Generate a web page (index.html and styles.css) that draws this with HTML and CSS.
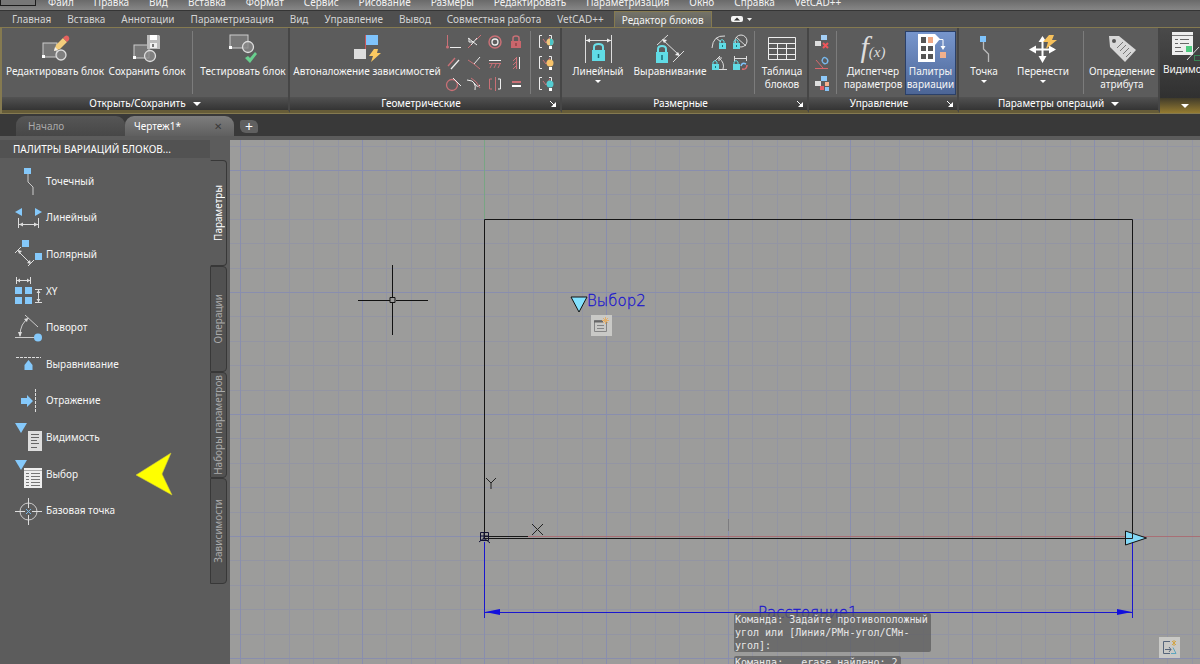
FILE: index.html
```
<!DOCTYPE html>
<html lang="ru">
<head>
<meta charset="utf-8">
<title>Редактор блоков</title>
<link rel="stylesheet" href="styles.css">
</head>
<body>
<nav class="menubar" aria-label="Меню">
  <span class="app-corner"></span>
  <a href="#">Файл</a><a href="#">Правка</a><a href="#">Вид</a><a href="#">Вставка</a><a href="#">Формат</a><a href="#">Сервис</a><a href="#">Рисование</a><a href="#">Размеры</a><a href="#">Редактировать</a><a href="#">Параметризация</a><a href="#">Окно</a><a href="#">Справка</a><a href="#">VetCAD++</a>
</nav>
<nav class="ribbon-tabs" aria-label="Вкладки ленты">
  <button>Главная</button><button>Вставка</button><button>Аннотации</button><button>Параметризация</button><button>Вид</button><button>Управление</button><button>Вывод</button><button>Совместная работа</button><button>VetCAD++</button><button class="active">Редактор блоков</button>
  <button class="collapse" aria-label="Свернуть ленту"><svg width="24" height="8"><rect x="0" y="1" width="12" height="6" rx="2" fill="#f4f4f4"/><path d="M3 5.500 6 2.500l3 3z" fill="#333"/><path d="M16 3h5l-2.500 3z" fill="#eee"/></svg></button>
</nav>

<header class="ribbon">
  <section class="panel p-open">
    <div class="panel-body">
      <button class="tool w102"><svg width="32" height="32" viewBox="0 0 32 32"><rect x="4" y="11" width="14" height="14" fill="#777" stroke="#ccc"/><circle cx="22" cy="23" r="5" fill="#888" fill-opacity=".8" stroke="#ddd" stroke-width="1.300"/><rect x="3" y="23" width="3" height="3" fill="#fff"/><path d="M15 19l2-6 7-7 4 4-7 7z" fill="#f3cd7c"/><path d="M24 6l2-2q2-1 3.500.5t.5 3.500l-2 2z" fill="#e5625e"/><path d="M15 19l1-4 3 3z" fill="#eee"/></svg><span>Редактировать блок</span></button>
      <button class="tool w82"><svg width="32" height="32" viewBox="0 0 32 32"><rect x="3" y="13" width="15" height="13" fill="#777" stroke="#ccc"/><circle cx="19" cy="24" r="5.500" fill="#888" fill-opacity=".8" stroke="#ddd" stroke-width="1.300"/><rect x="2" y="24" width="3" height="3" fill="#fff"/><path d="M16 3h12l1 1v13H16z" fill="#bbb"/><rect x="19" y="3" width="7" height="5" fill="#fff"/><rect x="19" y="11" width="7" height="5" fill="#eee"/><rect x="21" y="12" width="2" height="3" fill="#777"/></svg><span>Сохранить блок</span></button>
      <i class="sep"></i>
      <button class="tool w92"><svg width="32" height="32" viewBox="0 0 32 32"><rect x="3" y="3" width="18" height="13" fill="#777" stroke="#ccc"/><circle cx="21" cy="15" r="5.500" fill="#888" fill-opacity=".8" stroke="#ddd" stroke-width="1.300"/><rect x="2" y="14" width="3" height="3" fill="#fff"/><path d="M18 26l3-2 2 2 5-6 2 2-7 9z" fill="#69cf8e"/></svg><span>Тестировать блок</span></button>
    </div>
    <button class="panel-title">Открыть/Сохранить<b class="down"></b></button>
  </section>

  <section class="panel p-geom">
    <div class="panel-body">
      <button class="tool w150"><svg width="32" height="32" viewBox="0 0 32 32"><path d="M14.500 3v24" stroke="#c8555c"/><rect x="15" y="3" width="12" height="10" fill="#7fc3fb"/><rect x="3" y="17" width="12" height="10" fill="#ddd"/><path d="M23 17h4l-1 4h4L20 30l2-6h-4z" fill="#fbc961"/></svg><span>Автоналожение зависимостей</span></button>
      <div class="icon-grid four">
        <button aria-label="Совпадение"><svg width="16" height="16"><path d="M2.500 1v12" stroke="#c97076"/><circle cx="2.500" cy="13" r="1.500" fill="#c97076"/><path d="M5 13.500h11" stroke="#eee"/></svg></button>
        <button aria-label="Коллинеарность"><svg width="16" height="16"><path d="M2 14l5-5M10 6l5-5" stroke="#c97076"/><path d="M2 4l9 7M5 11l6-7M3 4v4h5" fill="none" stroke="#eee"/></svg></button>
        <button aria-label="Концентричность"><svg width="16" height="16" fill="none"><circle cx="8" cy="8" r="6" stroke="#c97076" stroke-width="1.500"/><circle cx="8" cy="8" r="3" stroke="#eee" stroke-width="1.300"/></svg></button>
        <button aria-label="Фиксация"><svg width="16" height="16"><path d="M5 7V4q0-2 3-2t3 2v3" fill="none" stroke="#c97076" stroke-width="1.500"/><rect x="3" y="7" width="10" height="7" fill="#c9666c"/><path d="M8 9v3" stroke="#733"/></svg></button>
        <button aria-label="Параллельность"><svg width="16" height="16"><path d="M3 11l7-8" stroke="#c97076" stroke-width="1.300"/><path d="M6 14l8-9" stroke="#eee" stroke-width="1.300"/></svg></button>
        <button aria-label="Перпендикулярность"><svg width="16" height="16"><path d="M8 9l6-7" stroke="#eee"/><path d="M2 5l6 4 6 5" fill="none" stroke="#c97076"/></svg></button>
        <button aria-label="Горизонтальность"><svg width="16" height="16"><path d="M2 5.500h12" stroke="#eee"/><path d="M2 8.500h12M5 9l-2 4M9 9l-2 4M13 9l-2 4" stroke="#c97076"/></svg></button>
        <button aria-label="Вертикальность"><svg width="16" height="16"><path d="M11.500 2v12" stroke="#eee"/><path d="M8.500 2v12M8 3L5 6M8 7l-3 3M8 11l-3 3" stroke="#c97076"/></svg></button>
        <button aria-label="Касательность"><svg width="16" height="16"><circle cx="7" cy="9" r="5.500" fill="none" stroke="#c97076" stroke-width="1.300"/><path d="M8 2l8 8" stroke="#eee"/></svg></button>
        <button aria-label="Сглаживание"><svg width="16" height="16" fill="none"><path d="M1 4q6 0 8 4t5 1" stroke="#eee"/><path d="M5 2q6 3 9 10" stroke="#c97076"/><path d="M8 7q2 3 1 7" stroke="#eee"/></svg></button>
        <button aria-label="Симметрия"><svg width="16" height="16" fill="none"><path d="M5 3H2.500v10H5M8.500 1v14" stroke="#c97076"/><path d="M11 3h2.500v10H11" stroke="#eee"/></svg></button>
        <button aria-label="Равенство"><svg width="16" height="16"><path d="M4 6h9" stroke="#c97076" stroke-width="2"/><path d="M4 10h9" stroke="#fff" stroke-width="2"/></svg></button>
      </div>
      <i class="sep"></i>
      <div class="icon-grid one">
        <button aria-label="Показать или скрыть"><svg width="16" height="16" fill="none"><path d="M4 1.500H1.500v12H4M11 1.500h2.500v4" stroke="#eee"/><path d="M5 5l3 4 4-6" stroke="#c97076"/><circle cx="12" cy="8" r="3.500" fill="#edc77d"/><path d="M12 4.500a3.500 3.500 0 0 1 0 7z" fill="#4bc5c8"/><rect x="11" y="12" width="3" height="3" fill="#fff"/></svg></button>
        <button aria-label="Показать все"><svg width="16" height="16" fill="none"><path d="M4 1.500H1.500v12H4M11 1.500h2.500v4" stroke="#eee"/><path d="M5 5l3 4 4-6" stroke="#c97076"/><circle cx="12" cy="8" r="3.500" fill="#f6c269"/><rect x="11" y="12" width="3" height="3" fill="#fff"/></svg></button>
        <button aria-label="Скрыть все"><svg width="16" height="16" fill="none"><path d="M4 1.500H1.500v12H4M11 1.500h2.500v4" stroke="#eee"/><path d="M5 5l3 4 4-6" stroke="#c97076"/><circle cx="12" cy="8" r="3.500" fill="#54cdd2"/><rect x="11" y="12" width="3" height="3" fill="#fff"/></svg></button>
      </div>
    </div>
    <button class="panel-title with-launch">Геометрические<svg class="launch" width="6" height="6"><path d="M0 0l4 4" stroke="#fff"/><path d="M6 1v5H1z" fill="#fff"/></svg></button>
  </section>

  <section class="panel p-dim">
    <div class="panel-body">
      <button class="tool w68"><svg width="32" height="32" viewBox="0 0 32 32"><path d="M3.500 3v28M29.500 3v28M4 8.500h25" stroke="#ddd"/><path d="M4 8.500l4-2v4zM29 8.500l-4-2v4z" fill="#eee"/><path d="M12 19v-4q0-3 4.500-3t4.500 3v4" fill="none" stroke="#6adfe8" stroke-width="2"/><rect x="10" y="18" width="13" height="11" fill="#60dce6"/><path d="M16.500 22v4" stroke="#176b74" stroke-width="1.500"/></svg><span>Линейный</span><b class="down small"></b></button>
      <button class="tool w76"><svg width="32" height="32" viewBox="0 0 32 32"><path d="M3 13L14 3M19 30L30 19M9 8l16 15" stroke="#ddd"/><path d="M8 7l5 1-3 3zM26 24l-5-1 3-3z" fill="#eee"/><path d="M4 21v-4q0-3 4-3t4 3v4" fill="none" stroke="#6adfe8" stroke-width="2"/><rect x="2" y="20" width="12" height="11" fill="#60dce6"/><path d="M8 23v5" stroke="#176b74" stroke-width="1.500"/></svg><span>Выравнивание</span></button>
      <div class="icon-grid two">
        <button aria-label="Радиус"><svg width="16" height="16" fill="none"><path d="M1 14Q2 1 14 2M5 4l5 4" stroke="#ddd"/><path d="M9 9V7q2-3 4 0v2" stroke="#60dce6"/><rect x="8" y="9" width="7" height="6" fill="#60dce6"/><path d="M11.500 11v2" stroke="#177"/></svg></button>
        <button aria-label="Диаметр"><svg width="16" height="16" fill="none"><circle cx="9" cy="7" r="6" stroke="#ddd"/><path d="M4 3l10 9" stroke="#ddd"/><path d="M2 9V7q2-3 4 0v2" stroke="#60dce6"/><rect x="1" y="9" width="7" height="6" fill="#60dce6"/><path d="M4.500 11v2" stroke="#177"/></svg></button>
        <button aria-label="Угловой"><svg width="16" height="16" fill="none"><path d="M4 6l5-5M8 3q6 5 4 11M8 14.500h8M8 3v3M8 3h3" stroke="#ddd"/><path d="M2 9V7q2-3 4 0v2" stroke="#60dce6"/><rect x="1" y="9" width="7" height="6" fill="#60dce6"/><path d="M4.500 11v2" stroke="#177"/></svg></button>
        <button aria-label="Преобразовать"><svg width="16" height="16" fill="none"><path d="M2.500 1v5M14.500 1v5M3 3.500h11" stroke="#ddd"/><path d="M2 9V7q2-3 4 0v2" stroke="#60dce6"/><rect x="1" y="9" width="7" height="6" fill="#60dce6"/><path d="M9 11q1-4 5-2" stroke="#7fc3fb" stroke-width="1.500"/><path d="M15 10q0 5-5 4" stroke="#e06d72" stroke-width="1.500"/></svg></button>
      </div>
      <i class="sep"></i>
      <button class="tool w46"><svg width="32" height="32" viewBox="0 0 32 32" fill="none" stroke="#eee"><path d="M2.500 5.500h27v22h-27zM2.500 11.500h27M2.500 16.500h27M2.500 22.500h27M11.500 11.500v16M20.500 11.500v16"/></svg><span>Таблица<br>блоков</span></button>
    </div>
    <button class="panel-title with-launch">Размерные<svg class="launch" width="6" height="6"><path d="M0 0l4 4" stroke="#fff"/><path d="M6 1v5H1z" fill="#fff"/></svg></button>
  </section>

  <section class="panel p-manage">
    <div class="panel-body">
      <div class="icon-grid one">
        <button aria-label="Удалить зависимости"><svg width="16" height="16"><rect x="7" y="1" width="6" height="5" fill="#a4cff6"/><rect x="1" y="7" width="6" height="5" fill="#ddd"/><path d="M9 9l5 5M14 9l-5 5" stroke="#ef555a" stroke-width="2"/></svg></button>
        <button aria-label="Конструкция"><svg width="16" height="16" fill="none"><path d="M1 13.500h13M2 5l7 8" stroke="#d9676c"/><path d="M8 6q1-5 4-3t1 5q-3 2-5-2" stroke="#78b8ed" stroke-width="1.500"/></svg></button>
        <button aria-label="Параметры"><svg width="16" height="16"><rect x="7" y="0" width="6" height="5" fill="#8ec9fa"/><rect x="1" y="5" width="6" height="5" fill="#ddd"/><rect x="11" y="6" width="4" height="4" fill="#f5b08c"/><rect x="6" y="10" width="4" height="4" fill="#e35d64"/><rect x="11" y="11" width="4" height="4" fill="#87c2f5"/></svg></button>
      </div>
      <i class="sep"></i>
      <button class="tool w64"><span class="fx">f<small>(x)</small></span><span>Диспетчер<br>параметров</span></button>
      <button class="tool w51 pressed"><svg width="32" height="32" viewBox="0 0 32 32"><rect x="3" y="2" width="17" height="28" fill="#fff"/><g fill="#555"><rect x="6" y="5" width="5" height="6"/><rect x="6" y="14" width="5" height="5"/><rect x="6" y="22" width="5" height="5"/><rect x="13" y="14" width="5" height="5"/><rect x="13" y="22" width="5" height="5"/></g><rect x="13" y="5" width="5" height="6" fill="#f1a985"/><path d="M20 2l5 5-5 6z" fill="#fff"/><path d="M22 7.500h6v8" fill="none" stroke="#fff"/><path d="M25.500 14h5L28 18z" fill="#fff"/><rect x="25" y="20" width="6" height="6" fill="#f1b08c"/></svg><span>Палитры<br>вариации</span></button>
    </div>
    <button class="panel-title with-launch">Управление<svg class="launch" width="6" height="6"><path d="M0 0l4 4" stroke="#fff"/><path d="M6 1v5H1z" fill="#fff"/></svg></button>
  </section>

  <section class="panel p-action">
    <div class="panel-body">
      <button class="tool w46"><svg width="32" height="32" viewBox="0 0 32 32"><path d="M15.500 8v9l5 5v8" fill="none" stroke="#bbb" stroke-width="1.300"/><rect x="12" y="4" width="6" height="6" fill="#7fc3fb"/></svg><span>Точка</span><b class="down small"></b></button>
      <button class="tool w72"><svg width="32" height="32" viewBox="0 0 32 32"><path d="M15.500 6v22M5 17.500h22" stroke="#fff" stroke-width="2"/><path d="M15.500 4l4 6h-8zM15.500 31l-4-7h8zM2 17.500l7-4v8zM29 17.500l-7-4v8z" fill="#fff"/><path d="M22 3h5l-2 5h5L19 17l2-7h-5z" fill="#f6c15c"/></svg><span>Перенести</span><b class="down small"></b></button>
      <i class="sep"></i>
      <button class="tool w68"><svg width="32" height="32" viewBox="0 0 32 32"><path d="M3 4h10l17 14-11 12L4 15z" fill="#d8d8d8"/><circle cx="8" cy="9" r="2" fill="#555"/><path d="M11 16l6-6M14 19l6-6M17 22l6-6M20 25l5-5" stroke="#777"/></svg><span>Определение<br>атрибута</span></button>
    </div>
    <button class="panel-title">Параметры операций<b class="down"></b></button>
  </section>

  <section class="panel p-vis">
    <div class="panel-body">
      <button class="tool w68"><svg width="40" height="32" viewBox="0 0 40 32"><rect x="12" y="2" width="21" height="23" fill="#eee"/><path d="M12 5.500h21" stroke="#777"/><path d="M15 9.500h3M20 9.500h9M15 13.500h3M20 13.500h9M15 17.500h6M15 21.500h8" stroke="#666"/><rect x="26" y="16" width="6" height="6" fill="#4ecb80"/><path d="M27 30L39 17" stroke="#ddd"/><rect x="34.500" y="25.500" width="6" height="5" fill="none" stroke="#3a8655"/></svg><span>Видимость</span></button>
    </div>
    <button class="panel-title" aria-label="Видимость"><b class="down"></b></button>
  </section>
</header>

<div class="doc-tabs">
  <button class="doc">Начало</button>
  <button class="doc current">Чертеж1*<span class="x">✕</span></button>
  <button class="plus" aria-label="Новый чертеж">+</button>
</div>

<main class="workspace">
  <aside class="palette">
    <h1>ПАЛИТРЫ ВАРИАЦИЙ БЛОКОВ...</h1>
    <div class="palette-main">
      <div class="palette-list">
        <button><svg width="28" height="28" fill="none"><path d="M14 6v9l5 5v8" stroke="#ccc"/><rect x="10" y="1" width="7" height="6" fill="#85c9fb"/></svg>Точечный</button>
        <button><svg width="28" height="28"><path d="M1 8l7-4v8zM28 8l-7-4v8z" fill="#85c9fb"/><path d="M4.500 14v10M24.500 14v10M5 20.500h19" stroke="#ddd"/><path d="M5 20.500l4-2v4zM24 20.500l-4-2v4z" fill="#ddd"/></svg>Линейный</button>
        <button><svg width="28" height="28"><path d="M1 13l6-6M14 26l6-6M4 11l12 12" stroke="#ddd"/><path d="M4 10l4 1-3 3zM17 24l-4-1 3-3z" fill="#ddd"/><rect x="8" y="0" width="7" height="7" fill="#85c9fb"/><rect x="21" y="13" width="7" height="7" fill="#85c9fb"/></svg>Полярный</button>
        <button><svg width="28" height="28"><g fill="#85c9fb"><rect x="1" y="10" width="7" height="7"/><rect x="11" y="10" width="7" height="7"/><rect x="1" y="20" width="7" height="7"/><rect x="11" y="20" width="7" height="7"/></g><path d="M2.500 0v7M16.500 0v7M3 3.500h13M21 12.500h7M21 25.500h7M24.500 13v12" stroke="#ddd"/><path d="M3 3.500l3-2v4zM16 3.500l-3-2v4zM24.500 13l-2 3h4zM24.500 25l-2-3h4z" fill="#ddd"/></svg>XY</button>
        <button><svg width="28" height="28" fill="none"><path d="M1 23.500h24M11 1l13 12M15 4Q6 9 6 22" stroke="#ccc"/><path d="M14 4l-4 1 3 3zM6 23l-2-5h4z" fill="#ddd"/><circle cx="24" cy="23.500" r="4" fill="#85c9fb"/></svg>Поворот</button>
        <button><svg width="28" height="28"><path d="M2 7.500h25" stroke="#ddd" stroke-dasharray="3 1"/><path d="M14.500 10l4 5v5h-8v-5z" fill="#85c9fb"/></svg>Выравнивание</button>
        <button><svg width="28" height="28"><path d="M7 11h6V8l6 6-6 6v-3H7z" fill="#85c9fb"/><path d="M21.500 2v24" stroke="#ddd" stroke-dasharray="3 1"/></svg>Отражение</button>
        <button><svg width="28" height="28"><path d="M1 0h12L7 10z" fill="#85c9fb"/><rect x="14" y="8" width="14" height="20" fill="#ddd"/><path d="M17 11.500h8M17 14.500h8M17 17.500h6M17 20.500h8M17 24.500h6" stroke="#666"/></svg>Видимость</button>
        <button><svg width="28" height="28"><path d="M1 0h12L7 10z" fill="#85c9fb"/><rect x="10" y="8" width="18" height="20" fill="#eee"/><path d="M10 10.500h18" stroke="#aaa"/><path d="M12 13.500h3M17 13.500h9M12 16.500h3M17 16.500h9M12 19.500h3M17 19.500h9M12 22.500h3M17 22.500h9M12 25.500h3M17 25.500h9" stroke="#777"/></svg>Выбор</button>
        <button><svg width="28" height="28" fill="none"><circle cx="14.500" cy="14.500" r="8.500" stroke="#ccc"/><path d="M14.500 1v10M14.500 18v10M1 14.500h10M18 14.500h10" stroke="#ddd"/><path d="M12 12l5 5M17 12l-5 5" stroke="#7ab8e5"/></svg>Базовая точка</button>
      </div>
      <div class="side-tabs">
        <button class="active"><span>Параметры</span></button>
        <button><span>Операции</span></button>
        <button><span>Наборы параметров</span></button>
        <button><span>Зависимости</span></button>
      </div>
    </div>
    <svg class="pointer" width="38" height="44" aria-hidden="true"><path d="M1 23L36 1l-9 21 10 21z" fill="#ffff00" stroke="#c9c540" stroke-width=".6"/></svg>
  </aside>

  <div class="canvas">
    <svg class="drawing" width="100%" height="100%">
      <defs>
        <pattern id="grid" width="122" height="122" x="254" y="396" patternUnits="userSpaceOnUse">
          <path d="M24.500 0v122M49.500 0v122M73.500 0v122M98.500 0v122M0 24.500h122M0 49.500h122M0 73.500h122M0 98.500h122" stroke="#9395a3"/>
          <path d="M.5 0v122M0 .5h122" stroke="#898eae"/>
        </pattern>
      </defs>
      <rect width="100%" height="100%" fill="url(#grid)"/>
      <g transform="translate(-230 -140)" fill="none">
        <path d="M484.500 140v79" stroke="#79a584"/>
        <path d="M528 536.500h672" stroke="#a86f75"/>
        <path d="M728.500 519v12" stroke="#7c7c80"/>
        <path d="M484.500 538V219.500h648V538" stroke="#151515"/>
        <path d="M484 538.500h649M484 536.500h44" stroke="#181818"/>
        <path d="M484.500 542v76M1132.500 540v78M484 612.500h648" stroke="#1a17cf"/>
        <path d="M485 612l15-3v6zM1132 612l-15-3v6z" fill="#1210dd"/>
        <path d="M480.500 532.500h8v8h-8zM479 542l5-4 6 5M484 532v9M481 536h8" stroke="#111133"/>
        <path d="M486 478l5 5 5-5M491 483v6M532 524l11 11M543 524l-11 11" stroke="#222"/>
        <path d="M1125.500 531v14l21-7z" fill="#83d9f7" stroke="#111"/><path d="M1132.500 533v5.500h-7" stroke="#222"/>
        <path d="M571 297h16l-8 15z" fill="#83e2ff" stroke="#111"/>
        <path d="M392.500 265v32M392.500 303v32M358 300.500h32M396 300.500h32M390 297.500h5v5h-5z" stroke="#111"/>
        <text x="587" y="306" class="cad-text">Выбор2</text>
        <text x="758" y="618" class="cad-text">Расстояние1</text>
        <rect x="591" y="315" width="21" height="21" fill="#c9c9c6"/>
        <path d="M594.500 320.500h12v11h-12zM597 325.500h7M597 328.500h7" stroke="#858585"/><path d="M594 321.500h9" stroke="#666" stroke-width="2"/><path d="M605.500 317v7M602 320.500h7M603 318l5 5M608 318l-5 5" stroke="#e2ae69"/>
      </g>
    </svg>
    <div class="command-log"><p>Команда: Задайте противоположный угол или [Линия/РМн-угол/СМн-угол]:</p><p class="short">Команда: &nbsp;_erase найдено: 2</p></div>
    <button class="corner" aria-label="Параметры блока"><svg width="21" height="21" fill="none"><path d="M11 4.500H4.500v12H11M6 12.500h6M10 10l2 2.500-2 2.500" stroke="#56657a"/><path d="M12 16.500h5l-3-6" stroke="#5ca5be"/><path d="M13 4l4 4M17 4l-4 4M15 3v6" stroke="#d1a446"/></svg></button>
  </div>
</main>
</body>
</html>
```
FILE: styles.css
```
* { box-sizing: border-box; }
body {
  margin: 0;
  height: 100vh;
  display: flex;
  flex-direction: column;
  overflow: hidden;
  background: #5c5c5c;
  color: #f6f6f6;
  font: 10px/13px "Noto Sans", "Open Sans", sans-serif;
}
button {
  margin: 0;
  padding: 0;
  border: 0;
  background: none;
  color: inherit;
  font: inherit;
}
svg { display: block; flex: none; }

.menubar {
  display: flex;
  align-items: flex-end;
  gap: 20px;
  height: 10px;
  overflow: hidden;
  background: linear-gradient(#6a6a6a, #868686);
  white-space: nowrap;
}
.menubar a { margin-bottom: 1px; color: #f2f2f2; text-decoration: none; line-height: 14px; }
.app-corner { width: 36px; height: 6px; margin: 0 -8px 4px 0; border: 1px solid #1c1c1c; border-top: 0; background: #777; }

.ribbon-tabs {
  display: flex;
  height: 17px;
  padding-left: 4px;
  background: #4f4f4f;
  border-top: 1px solid #353535;
  color: #d4d4d4;
}
.ribbon-tabs button { padding: 0 8px; white-space: nowrap; line-height: 16px; }
.ribbon-tabs .active {
  margin-left: 2px;
  padding: 0 7px;
  background: linear-gradient(#747368, #5e5e5c);
  border: 1px solid #857a50;
  border-bottom: 0;
  color: #f3f3f3;
  line-height: 14px;
}
.ribbon-tabs .collapse { padding: 0 19px; }

.ribbon {
  display: flex;
  height: 87px;
  overflow: hidden;
  border: solid #857a50;
  border-width: 1px 0 1px 2px;
  background: #5c5c5c;
}
.panel {
  display: flex;
  flex: none;
  flex-direction: column;
  border-right: 2px solid #464646;
  border-bottom: 3px solid #665c38;
}
.panel-body { display: flex; height: 70px; padding: 3px 2px 0; }
.panel-title {
  display: flex;
  align-items: center;
  justify-content: center;
  position: relative;
  flex: 1;
  background: linear-gradient(#525252, #343434);
  color: #fff;
}
.with-launch { padding-right: 8px; }
.p-open { width: 288px; }
.p-geom { width: 272px; }
.p-dim { width: 247px; }
.p-manage { width: 150px; }
.p-action { width: 201px; }
.p-vis { flex: 1 0 40px; min-width: 0; border-right: 0; border-bottom: 0; overflow: hidden; background: linear-gradient(#4a4a4a, #2b2b2b); }
.p-vis .panel-title { background: linear-gradient(#403b2a, #957b31); }
.p-vis .panel-body { padding: 1px 0 0; }
.p-vis .tool { align-items: flex-start; }
.p-vis .tool span { padding-left: 3px; }
.p-manage .panel-body { padding-right: 0; }

.tool {
  display: flex;
  flex: none;
  flex-direction: column;
  align-items: center;
  gap: 1px;
  height: 64px;
  padding-top: 1px;
  white-space: nowrap;
}
.w102 { width: 102px; } .w82 { width: 82px; } .w92 { width: 92px; } .w150 { width: 150px; }
.w68 { width: 68px; } .w64 { width: 64px; } .w72 { width: 72px; } .w76 { width: 76px; } .w46 { width: 46px; } .w51 { width: 51px; }
.pressed { border: 1px solid #2b4068; background: linear-gradient(#7796cd, #4c6595); padding-top: 0; }
.sep { flex: none; width: 1px; height: 63px; margin: 0 4px; background: #7c7c7c; }
.down { border: 4px solid transparent; border-top-color: #fff; border-bottom: 0; margin-left: 7px; }
.p-vis .down { margin: 0 0 0 10px; }
.down.small { border-width: 3px 3px 0; margin: 1px 0 0; }
.launch { position: absolute; right: 4px; top: 4px; }
.fx { height: 32px; font: italic 30px/30px "Liberation Serif", serif; color: #ddd; }
.fx small { font-size: 15px; }

.icon-grid { display: grid; flex: none; grid-auto-rows: 21px; }
.icon-grid button { display: grid; place-items: center; }
.four { grid-template-columns: repeat(4, 21px); }
.two { grid-template-columns: repeat(2, 21px); }
.one { grid-template-columns: 21px; }

.doc-tabs { display: flex; align-items: flex-end; height: 22px; padding-left: 16px; background: #393939; }
.doc {
  width: 109px;
  height: 20px;
  padding-left: 12px;
  border-radius: 9px 9px 0 0;
  background: linear-gradient(#565656, #474747);
  color: #aaa;
  text-align: left;
}
.current { display: flex; align-items: center; justify-content: space-between; padding: 0 12px 0 9px; background: linear-gradient(#7d7d7d, #5f5f5f); color: #fff; }
.x { color: #3a3a3a; }
.plus { width: 18px; height: 13px; margin: 0 0 3px 6px; border-radius: 2px 6px 2px 6px; background: #606060; color: #fff; font-size: 14px; line-height: 12px; }

.workspace { display: flex; flex: 1; min-height: 0; border-top: 4px solid #5c5c5c; }
.palette { position: relative; flex: none; width: 230px; background: #5c5c5c; }
.palette h1 { width: 210px; margin: 0; padding: 0 0 0 13px; background: #525252; font-size: 10px; font-weight: 400; line-height: 18px; white-space: nowrap; color: #fff; }
.palette-main { display: flex; align-items: flex-start; }
.palette-list { display: grid; grid-auto-rows: 1fr; width: 210px; height: 366px; margin-top: 5px; }
.palette-list button { display: flex; align-items: center; gap: 4px; padding-left: 14px; }
.side-tabs { display: grid; grid-template-rows: repeat(4, minmax(0, 1fr)); width: 17px; height: 424px; margin-top: 2px; }
.side-tabs button { display: grid; place-items: center; border: 1px solid #383838; border-radius: 0 4px 4px 0; background: #515151; color: #aaa; }
.side-tabs .active { border-left-color: #5c5c5c; background: #5c5c5c; color: #fff; }
.side-tabs span { writing-mode: vertical-rl; transform: rotate(180deg); white-space: nowrap; }
.pointer { position: absolute; left: 135px; top: 312px; }

.canvas { position: relative; flex: 1; min-width: 0; overflow: hidden; background: #9c9c9b; }
.drawing { position: absolute; inset: 0; }
.cad-text { fill: #1c18cc; stroke: #1c18cc; stroke-width: .3px; font: 200 15px "DejaVu Sans", sans-serif; }
.command-log { position: absolute; left: 504px; bottom: -5px; width: 197px; color: #e8e8e8; font: 10px/13px "DejaVu Sans Mono", monospace; }
.command-log p { margin: 0 0 4px; padding: 0 1px; background: rgba(92, 92, 92, .75); border-radius: 2px; }
.command-log .short { width: 167px; margin: 0; white-space: nowrap; }
.corner { position: absolute; right: 20px; bottom: 6px; background: #c9c9c6; }
```
